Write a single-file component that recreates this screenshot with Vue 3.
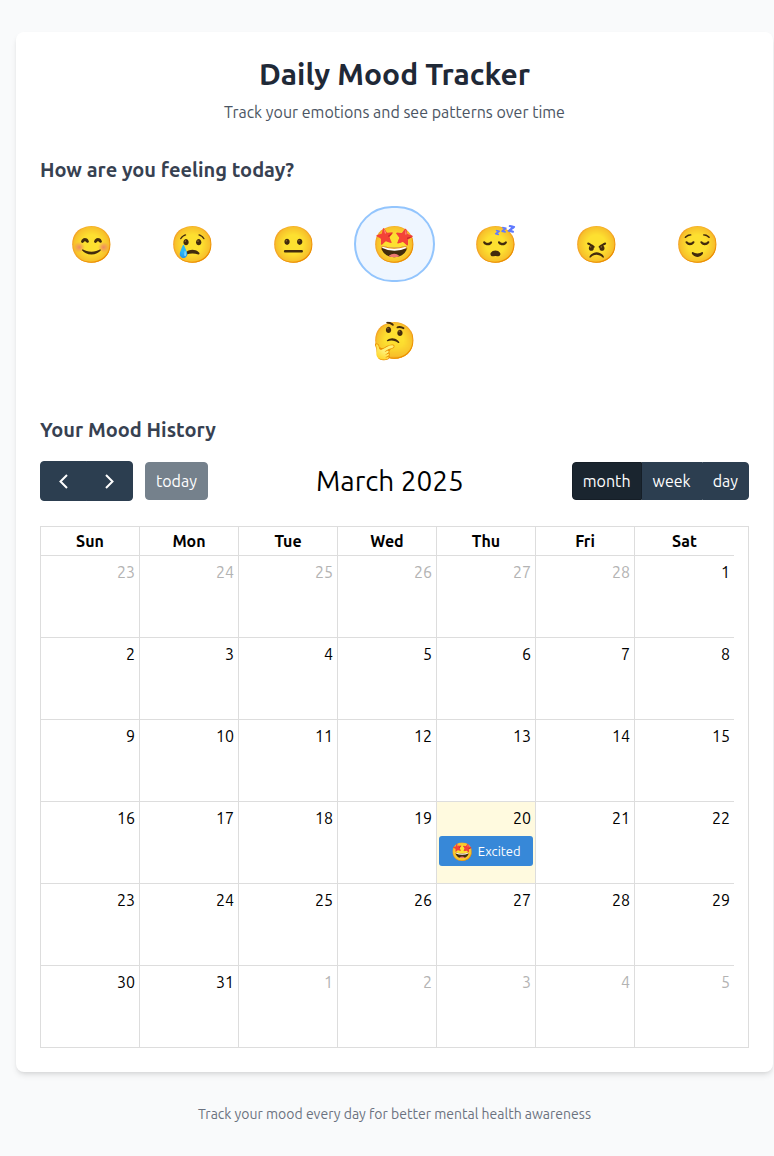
<script setup>
import { ref } from 'vue'

const moods = [
  { emoji: '😊', label: 'Happy' },
  { emoji: '😢', label: 'Sad' },
  { emoji: '😐', label: 'Neutral' },
  { emoji: '🤩', label: 'Excited' },
  { emoji: '😴', label: 'Tired' },
  { emoji: '😠', label: 'Angry' },
  { emoji: '😌', label: 'Calm' },
  { emoji: '🤔', label: 'Thoughtful' },
]
const selected = ref('Excited')
const views = ['month', 'week', 'day']
const view = ref('month')
const weekdays = ['Sun', 'Mon', 'Tue', 'Wed', 'Thu', 'Fri', 'Sat']

const firstCell = new Date(2025, 1, 23)
const weeks = Array.from({ length: 6 }, (_, w) =>
  Array.from({ length: 7 }, (_, d) => {
    const date = new Date(firstCell)
    date.setDate(firstCell.getDate() + w * 7 + d)
    const inMonth = date.getMonth() === 2
    return { day: date.getDate(), other: !inMonth, today: inMonth && date.getDate() === 20 }
  })
)
</script>

<template>
  <div class="page">
    <main class="card">
      <header class="intro">
        <h1>Daily Mood Tracker</h1>
        <p>Track your emotions and see patterns over time</p>
      </header>

      <section class="feeling">
        <h2>How are you feeling today?</h2>
        <div class="moods">
          <button
            v-for="m in moods"
            :key="m.label"
            type="button"
            class="mood"
            :class="{ selected: selected === m.label }"
            :aria-label="m.label"
            :aria-pressed="selected === m.label"
            @click="selected = m.label"
          >{{ m.emoji }}</button>
        </div>
      </section>

      <section>
        <h2>Your Mood History</h2>
        <div class="toolbar">
          <div class="left">
            <div class="group">
              <button type="button" class="btn arrow" aria-label="Previous month">
                <svg viewBox="0 0 24 24" aria-hidden="true"><path d="M15 6 8.5 12.5 15 19" /></svg>
              </button>
              <button type="button" class="btn arrow" aria-label="Next month">
                <svg viewBox="0 0 24 24" aria-hidden="true"><path d="m8 6 6.5 6.5L8 19" /></svg>
              </button>
            </div>
            <button type="button" class="btn today-btn" disabled>today</button>
          </div>
          <div class="month-title">March 2025</div>
          <div class="group">
            <button
              v-for="v in views"
              :key="v"
              type="button"
              class="btn"
              :class="{ active: view === v }"
              :aria-pressed="view === v"
              @click="view = v"
            >{{ v }}</button>
          </div>
        </div>

        <div class="calendar">
          <table>
            <thead>
              <tr><th v-for="d in weekdays" :key="d" scope="col">{{ d }}</th></tr>
            </thead>
            <tbody>
              <tr v-for="(week, i) in weeks" :key="i">
                <td v-for="c in week" :key="c.day" :class="{ other: c.other, today: c.today }">
                  <div class="num">{{ c.day }}</div>
                  <div v-if="c.today" class="event"><span class="face">🤩</span><span>Excited</span></div>
                </td>
              </tr>
            </tbody>
          </table>
        </div>
      </section>
    </main>
    <footer>Track your mood every day for better mental health awareness</footer>
  </div>
</template>

<style>
body {
  margin: 0;
  background: #f9fafb;
}
</style>

<style scoped>
.page,
.page * {
  box-sizing: border-box;
}
.page {
  min-height: 100vh;
  padding: 32px 1px 32px 16px;
  background: #f9fafb;
  font-family: Ubuntu, "Noto Sans", "Noto Color Emoji", sans-serif;
  font-size: 16px;
  line-height: 24px;
  color: #000;
}
button {
  font: inherit;
  cursor: pointer;
}
.card {
  padding: 24px;
  background: #fff;
  border-radius: 8px;
  box-shadow: 0 4px 6px -1px rgba(0, 0, 0, 0.1), 0 2px 4px -2px rgba(0, 0, 0, 0.1);
}
.intro {
  margin-bottom: 32px;
  text-align: center;
}
h1 {
  margin: 0 0 8px;
  font-size: 30px;
  line-height: 36px;
  font-weight: 700;
  color: #1f2937;
}
.intro p {
  margin: 0;
  color: #4b5563;
}
h2 {
  margin: 0 0 16px;
  font-size: 20px;
  line-height: 28px;
  font-weight: 700;
  color: #374151;
}
.feeling {
  margin-bottom: 32px;
}
.moods {
  display: flex;
  flex-wrap: wrap;
  justify-content: center;
  row-gap: 20px;
  padding: 6px 0;
}
.mood {
  width: 81px;
  height: 76px;
  margin: 0 10px;
  padding: 0;
  border: 2px solid transparent;
  border-radius: 9999px;
  background: transparent;
  font-size: 36px;
  line-height: 40px;
}
.mood.selected {
  background: #eff6ff;
  border-color: #93c5fd;
}
.toolbar {
  display: flex;
  align-items: center;
  justify-content: space-between;
  margin-bottom: 24px;
  padding: 1px 0;
}
.left {
  display: flex;
  align-items: center;
  gap: 12px;
}
.group {
  display: flex;
}
.btn {
  padding: 6px 10px;
  border: 1px solid #2c3e50;
  border-radius: 4px;
  background: #2c3e50;
  color: #fff;
  line-height: 24px;
}
.group .btn:not(:last-child) {
  border-top-right-radius: 0;
  border-bottom-right-radius: 0;
}
.group .btn:not(:first-child) {
  border-top-left-radius: 0;
  border-bottom-left-radius: 0;
}
.btn.active {
  background: #1a252f;
  border-color: #151e27;
}
.arrow {
  display: flex;
  align-items: center;
  justify-content: center;
  width: 47px;
  height: 40px;
  padding: 0;
}
.arrow + .arrow {
  margin-left: -1px;
}
.arrow svg {
  width: 24px;
  height: 24px;
  fill: none;
  stroke: #fff;
  stroke-width: 2;
}
.today-btn:disabled {
  opacity: 0.65;
  cursor: default;
}
.month-title {
  font-size: 28px;
  line-height: 40px;
}
.calendar {
  padding-right: 14px;
  border: 1px solid #ddd;
}
table {
  width: 100%;
  table-layout: fixed;
  border-collapse: separate;
  border-spacing: 0;
}
th,
td {
  padding: 0;
  border: 0 solid #ddd;
  border-right-width: 1px;
  border-bottom-width: 1px;
}
th:last-child,
td:last-child {
  border-right-width: 0;
}
th {
  height: 29px;
  font-weight: 700;
}
td {
  height: 82px;
  vertical-align: top;
}
tbody tr:last-child td {
  height: 81px;
  border-bottom-width: 0;
}
.num {
  padding: 4px 4px 0;
  text-align: right;
}
.other .num {
  color: #b3b3b3;
}
.today {
  background: rgba(255, 220, 40, 0.15);
}
.event {
  display: flex;
  align-items: center;
  justify-content: center;
  gap: 4px;
  height: 30px;
  margin: 6px 2px 0;
  border-radius: 3px;
  background: #3788d8;
  color: #fff;
  font-size: 13px;
}
.face {
  font-size: 18px;
}
footer {
  margin-top: 32px;
  text-align: center;
  font-size: 14px;
  line-height: 20px;
  color: #6b7280;
}
</style>
